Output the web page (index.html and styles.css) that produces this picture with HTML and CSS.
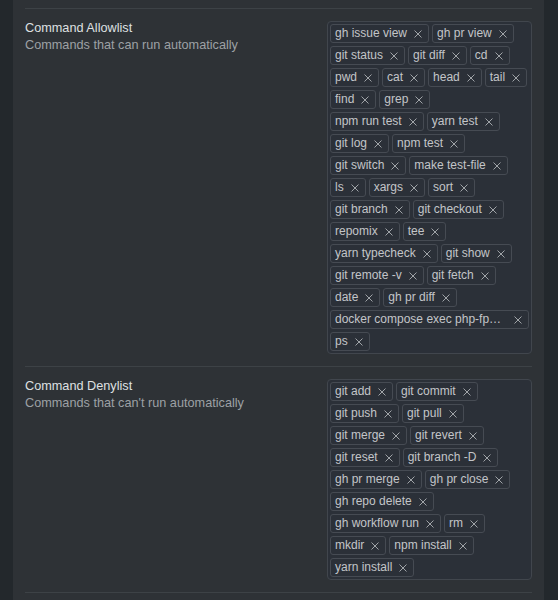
FILE: index.html
```html
<!DOCTYPE html>
<html>
<head>
<meta charset="utf-8">
<link rel="stylesheet" href="styles.css">
</head>
<body>
<div class="shell">
  <div class="panel">
    <div class="prev"></div>

    <section class="setting">
      <div class="label">
        <div class="title">Command Allowlist</div>
        <div class="desc">Commands that can run automatically</div>
      </div>
      <div class="tags">
        <div class="row">
          <span class="chip"><span class="txt">gh issue view</span><svg class="x" viewBox="0 0 8 8"><path d="M0.5 0.5L7.5 7.5M7.5 0.5L0.5 7.5"/></svg></span>
          <span class="chip"><span class="txt">gh pr view</span><svg class="x" viewBox="0 0 8 8"><path d="M0.5 0.5L7.5 7.5M7.5 0.5L0.5 7.5"/></svg></span>
        </div>
        <div class="row">
          <span class="chip"><span class="txt">git status</span><svg class="x" viewBox="0 0 8 8"><path d="M0.5 0.5L7.5 7.5M7.5 0.5L0.5 7.5"/></svg></span>
          <span class="chip"><span class="txt">git diff</span><svg class="x" viewBox="0 0 8 8"><path d="M0.5 0.5L7.5 7.5M7.5 0.5L0.5 7.5"/></svg></span>
          <span class="chip"><span class="txt">cd</span><svg class="x" viewBox="0 0 8 8"><path d="M0.5 0.5L7.5 7.5M7.5 0.5L0.5 7.5"/></svg></span>
        </div>
        <div class="row">
          <span class="chip"><span class="txt">pwd</span><svg class="x" viewBox="0 0 8 8"><path d="M0.5 0.5L7.5 7.5M7.5 0.5L0.5 7.5"/></svg></span>
          <span class="chip"><span class="txt">cat</span><svg class="x" viewBox="0 0 8 8"><path d="M0.5 0.5L7.5 7.5M7.5 0.5L0.5 7.5"/></svg></span>
          <span class="chip"><span class="txt">head</span><svg class="x" viewBox="0 0 8 8"><path d="M0.5 0.5L7.5 7.5M7.5 0.5L0.5 7.5"/></svg></span>
          <span class="chip"><span class="txt">tail</span><svg class="x" viewBox="0 0 8 8"><path d="M0.5 0.5L7.5 7.5M7.5 0.5L0.5 7.5"/></svg></span>
        </div>
        <div class="row">
          <span class="chip"><span class="txt">find</span><svg class="x" viewBox="0 0 8 8"><path d="M0.5 0.5L7.5 7.5M7.5 0.5L0.5 7.5"/></svg></span>
          <span class="chip"><span class="txt">grep</span><svg class="x" viewBox="0 0 8 8"><path d="M0.5 0.5L7.5 7.5M7.5 0.5L0.5 7.5"/></svg></span>
        </div>
        <div class="row">
          <span class="chip"><span class="txt">npm run test</span><svg class="x" viewBox="0 0 8 8"><path d="M0.5 0.5L7.5 7.5M7.5 0.5L0.5 7.5"/></svg></span>
          <span class="chip"><span class="txt">yarn test</span><svg class="x" viewBox="0 0 8 8"><path d="M0.5 0.5L7.5 7.5M7.5 0.5L0.5 7.5"/></svg></span>
        </div>
        <div class="row">
          <span class="chip"><span class="txt">git log</span><svg class="x" viewBox="0 0 8 8"><path d="M0.5 0.5L7.5 7.5M7.5 0.5L0.5 7.5"/></svg></span>
          <span class="chip"><span class="txt">npm test</span><svg class="x" viewBox="0 0 8 8"><path d="M0.5 0.5L7.5 7.5M7.5 0.5L0.5 7.5"/></svg></span>
        </div>
        <div class="row">
          <span class="chip"><span class="txt">git switch</span><svg class="x" viewBox="0 0 8 8"><path d="M0.5 0.5L7.5 7.5M7.5 0.5L0.5 7.5"/></svg></span>
          <span class="chip"><span class="txt">make test-file</span><svg class="x" viewBox="0 0 8 8"><path d="M0.5 0.5L7.5 7.5M7.5 0.5L0.5 7.5"/></svg></span>
        </div>
        <div class="row">
          <span class="chip"><span class="txt">ls</span><svg class="x" viewBox="0 0 8 8"><path d="M0.5 0.5L7.5 7.5M7.5 0.5L0.5 7.5"/></svg></span>
          <span class="chip"><span class="txt">xargs</span><svg class="x" viewBox="0 0 8 8"><path d="M0.5 0.5L7.5 7.5M7.5 0.5L0.5 7.5"/></svg></span>
          <span class="chip"><span class="txt">sort</span><svg class="x" viewBox="0 0 8 8"><path d="M0.5 0.5L7.5 7.5M7.5 0.5L0.5 7.5"/></svg></span>
        </div>
        <div class="row">
          <span class="chip"><span class="txt">git branch</span><svg class="x" viewBox="0 0 8 8"><path d="M0.5 0.5L7.5 7.5M7.5 0.5L0.5 7.5"/></svg></span>
          <span class="chip"><span class="txt">git checkout</span><svg class="x" viewBox="0 0 8 8"><path d="M0.5 0.5L7.5 7.5M7.5 0.5L0.5 7.5"/></svg></span>
        </div>
        <div class="row">
          <span class="chip"><span class="txt">repomix</span><svg class="x" viewBox="0 0 8 8"><path d="M0.5 0.5L7.5 7.5M7.5 0.5L0.5 7.5"/></svg></span>
          <span class="chip"><span class="txt">tee</span><svg class="x" viewBox="0 0 8 8"><path d="M0.5 0.5L7.5 7.5M7.5 0.5L0.5 7.5"/></svg></span>
        </div>
        <div class="row">
          <span class="chip"><span class="txt">yarn typecheck</span><svg class="x" viewBox="0 0 8 8"><path d="M0.5 0.5L7.5 7.5M7.5 0.5L0.5 7.5"/></svg></span>
          <span class="chip"><span class="txt">git show</span><svg class="x" viewBox="0 0 8 8"><path d="M0.5 0.5L7.5 7.5M7.5 0.5L0.5 7.5"/></svg></span>
        </div>
        <div class="row">
          <span class="chip"><span class="txt">git remote -v</span><svg class="x" viewBox="0 0 8 8"><path d="M0.5 0.5L7.5 7.5M7.5 0.5L0.5 7.5"/></svg></span>
          <span class="chip"><span class="txt">git fetch</span><svg class="x" viewBox="0 0 8 8"><path d="M0.5 0.5L7.5 7.5M7.5 0.5L0.5 7.5"/></svg></span>
        </div>
        <div class="row">
          <span class="chip"><span class="txt">date</span><svg class="x" viewBox="0 0 8 8"><path d="M0.5 0.5L7.5 7.5M7.5 0.5L0.5 7.5"/></svg></span>
          <span class="chip"><span class="txt">gh pr diff</span><svg class="x" viewBox="0 0 8 8"><path d="M0.5 0.5L7.5 7.5M7.5 0.5L0.5 7.5"/></svg></span>
        </div>
        <div class="row">
          <span class="chip wide"><span class="txt">docker compose exec php-fp…</span><svg class="x" viewBox="0 0 8 8"><path d="M0.5 0.5L7.5 7.5M7.5 0.5L0.5 7.5"/></svg></span>
        </div>
        <div class="row">
          <span class="chip"><span class="txt">ps</span><svg class="x" viewBox="0 0 8 8"><path d="M0.5 0.5L7.5 7.5M7.5 0.5L0.5 7.5"/></svg></span>
        </div>
      </div>
    </section>

    <section class="setting">
      <div class="label">
        <div class="title">Command Denylist</div>
        <div class="desc">Commands that can't run automatically</div>
      </div>
      <div class="tags">
        <div class="row">
          <span class="chip"><span class="txt">git add</span><svg class="x" viewBox="0 0 8 8"><path d="M0.5 0.5L7.5 7.5M7.5 0.5L0.5 7.5"/></svg></span>
          <span class="chip"><span class="txt">git commit</span><svg class="x" viewBox="0 0 8 8"><path d="M0.5 0.5L7.5 7.5M7.5 0.5L0.5 7.5"/></svg></span>
        </div>
        <div class="row">
          <span class="chip"><span class="txt">git push</span><svg class="x" viewBox="0 0 8 8"><path d="M0.5 0.5L7.5 7.5M7.5 0.5L0.5 7.5"/></svg></span>
          <span class="chip"><span class="txt">git pull</span><svg class="x" viewBox="0 0 8 8"><path d="M0.5 0.5L7.5 7.5M7.5 0.5L0.5 7.5"/></svg></span>
        </div>
        <div class="row">
          <span class="chip"><span class="txt">git merge</span><svg class="x" viewBox="0 0 8 8"><path d="M0.5 0.5L7.5 7.5M7.5 0.5L0.5 7.5"/></svg></span>
          <span class="chip"><span class="txt">git revert</span><svg class="x" viewBox="0 0 8 8"><path d="M0.5 0.5L7.5 7.5M7.5 0.5L0.5 7.5"/></svg></span>
        </div>
        <div class="row">
          <span class="chip"><span class="txt">git reset</span><svg class="x" viewBox="0 0 8 8"><path d="M0.5 0.5L7.5 7.5M7.5 0.5L0.5 7.5"/></svg></span>
          <span class="chip"><span class="txt">git branch -D</span><svg class="x" viewBox="0 0 8 8"><path d="M0.5 0.5L7.5 7.5M7.5 0.5L0.5 7.5"/></svg></span>
        </div>
        <div class="row">
          <span class="chip"><span class="txt">gh pr merge</span><svg class="x" viewBox="0 0 8 8"><path d="M0.5 0.5L7.5 7.5M7.5 0.5L0.5 7.5"/></svg></span>
          <span class="chip"><span class="txt">gh pr close</span><svg class="x" viewBox="0 0 8 8"><path d="M0.5 0.5L7.5 7.5M7.5 0.5L0.5 7.5"/></svg></span>
        </div>
        <div class="row">
          <span class="chip"><span class="txt">gh repo delete</span><svg class="x" viewBox="0 0 8 8"><path d="M0.5 0.5L7.5 7.5M7.5 0.5L0.5 7.5"/></svg></span>
        </div>
        <div class="row">
          <span class="chip"><span class="txt">gh workflow run</span><svg class="x" viewBox="0 0 8 8"><path d="M0.5 0.5L7.5 7.5M7.5 0.5L0.5 7.5"/></svg></span>
          <span class="chip"><span class="txt">rm</span><svg class="x" viewBox="0 0 8 8"><path d="M0.5 0.5L7.5 7.5M7.5 0.5L0.5 7.5"/></svg></span>
        </div>
        <div class="row">
          <span class="chip"><span class="txt">mkdir</span><svg class="x" viewBox="0 0 8 8"><path d="M0.5 0.5L7.5 7.5M7.5 0.5L0.5 7.5"/></svg></span>
          <span class="chip"><span class="txt">npm install</span><svg class="x" viewBox="0 0 8 8"><path d="M0.5 0.5L7.5 7.5M7.5 0.5L0.5 7.5"/></svg></span>
        </div>
        <div class="row">
          <span class="chip"><span class="txt">yarn install</span><svg class="x" viewBox="0 0 8 8"><path d="M0.5 0.5L7.5 7.5M7.5 0.5L0.5 7.5"/></svg></span>
        </div>
      </div>
    </section>
  </div>
</div>
</body>
</html>
```

FILE: styles.css
```css
html, body {
  margin: 0;
  padding: 0;
  background: #23282c;
  font-family: "Liberation Sans", Arial, sans-serif;
}

.shell {
  display: flex;
  padding: 0 14px 0 13px;
  height: 600px;
  overflow: hidden;
}

.panel {
  flex: 1;
  background: #2e3236;
  padding: 0 12px;
}

.prev {
  height: 8px;
  border-bottom: 1px solid #3d4246;
}

.setting {
  display: flex;
  justify-content: space-between;
  align-items: flex-start;
  padding: 12px 0;
  border-bottom: 1px solid #3d4246;
}

.title {
  font-size: 12.7px;
  line-height: 14px;
  color: #dfe0e2;
}

.desc {
  font-size: 12.7px;
  line-height: 17px;
  margin-top: 2px;
  color: #9da1a5;
}

.tags {
  width: 205px;
  box-sizing: border-box;
  display: flex;
  flex-direction: column;
  gap: 3px;
  padding: 2px;
  background: #2b3038;
  border: 1px solid #41464d;
  border-radius: 4px;
}

.row {
  display: flex;
  gap: 3px;
}

.chip {
  display: inline-flex;
  align-items: center;
  box-sizing: border-box;
  height: 19px;
  padding: 0 6px 0 4px;
  border: 1px solid #464b53;
  border-radius: 3px;
  font-size: 12px;
  line-height: 17px;
  color: #c3c5c8;
}

.chip.wide {
  flex: 1;
}

.txt {
  white-space: nowrap;
}

.wide .txt {
  flex: 1;
}

.x {
  flex: none;
  width: 8px;
  height: 8px;
  margin-left: 7px;
  fill: none;
  stroke: #aeb1b5;
  stroke-width: 0.9;
}
```
